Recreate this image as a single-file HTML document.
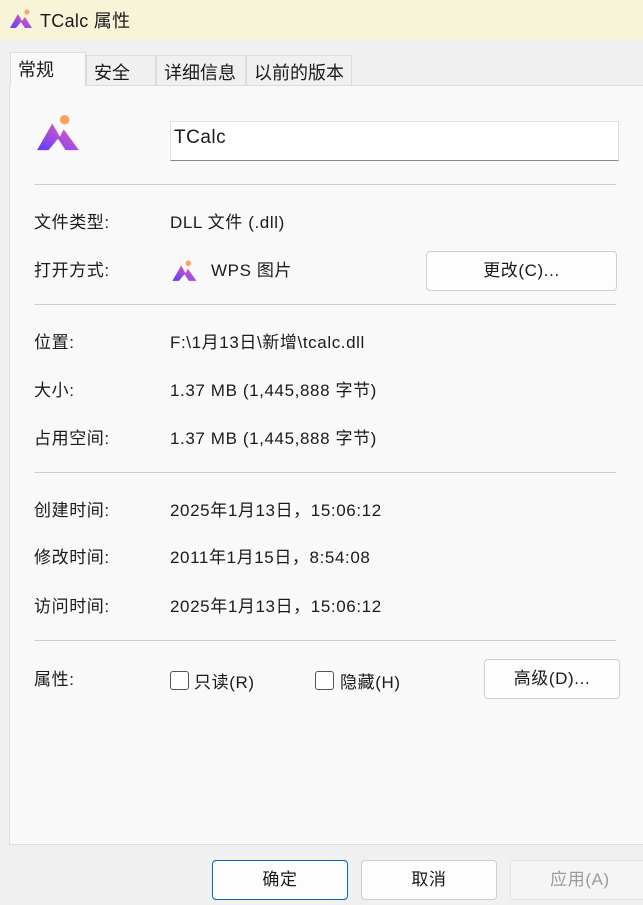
<!DOCTYPE html>
<html><head><meta charset="utf-8"><style>
body{margin:0;width:643px;height:905px;background:#f0f0f0;font-family:"Liberation Sans","Noto Sans CJK SC",sans-serif;font-size:17px;letter-spacing:0.6px;color:#1a1a1a;position:relative;overflow:hidden}
.a{position:absolute;white-space:nowrap}
.title{position:absolute;left:0;top:0;width:643px;height:40px;background:#f8f4d8}
.panel{position:absolute;left:9px;top:85px;width:640px;height:758px;background:#f9f9f9;border:1px solid #dcdcdc}
.tab{position:absolute;top:55px;height:30px;background:#f0f0f0;border:1px solid #dcdcdc;border-bottom:none;box-sizing:border-box;padding:3px 0 0 7px;font-size:18px;letter-spacing:0}
.hr{position:absolute;left:34px;width:582px;height:1px;background:#cfcfcf}
.btn{position:absolute;background:#fdfdfd;border:1px solid #cfcfcf;border-radius:4px;box-sizing:border-box;text-align:center}
.cb{position:absolute;width:19px;height:19px;border:1px solid #555;border-radius:3px;box-sizing:border-box;background:#fff}
</style></head><body>
<div class="title"></div>
<svg class="a" style="left:9px;top:9px" width="24" height="20" viewBox="0 0 48 40"><defs><linearGradient id="g" x1="0" y1="1" x2="1" y2="0"><stop offset="0" stop-color="#5a3cff"/><stop offset="1" stop-color="#ff5fb0"/></linearGradient></defs><circle cx="36" cy="6" r="5" fill="#ffa060"/><path d="M2 38 L18 10 L26 24 L32 16 L46 38 L32 38 L24 26 L14 38Z" fill="url(#g)"/></svg>
<div class="a" style="left:40px;top:7px;font-size:18px;letter-spacing:0.3px">TCalc 属性</div>
<div class="panel"></div>
<div class="tab" style="left:10px;top:52px;height:34px;width:76px;background:#f9f9f9;z-index:2">常规</div>
<div class="tab" style="left:86px;width:70px">安全</div>
<div class="tab" style="left:156px;width:90px">详细信息</div>
<div class="tab" style="left:246px;width:106px">以前的版本</div>
<svg class="a" style="left:34px;top:114px" width="48" height="38" viewBox="0 0 48 40"><defs><linearGradient id="g2" x1="0" y1="1" x2="1" y2="0"><stop offset="0" stop-color="#5a3cff"/><stop offset="1" stop-color="#ff5fb0"/></linearGradient></defs><circle cx="31" cy="6" r="5" fill="#ffa060"/><path d="M2 38 L18 10 L26 24 L30 16 L46 38 L32 38 L24 26 L14 38Z" fill="url(#g2)"/></svg>
<div class="a" style="left:170px;top:121px;width:449px;height:40px;background:#fff;border:1px solid #e0e0e0;border-bottom:1px solid #888;box-sizing:border-box;padding:5px 0 0 3px;font-size:19px;letter-spacing:0.5px">TCalc</div>
<div class="hr" style="top:184px"></div>
<div class="a" style="left:34px;top:208px">文件类型:</div><div class="a" style="left:170px;top:208px">DLL 文件 (.dll)</div>
<div class="a" style="left:34px;top:256px">打开方式:</div>
<svg class="a" style="left:170px;top:260px" width="29" height="22" viewBox="0 0 48 40"><defs><linearGradient id="g3" x1="0" y1="1" x2="1" y2="0"><stop offset="0" stop-color="#5a3cff"/><stop offset="1" stop-color="#ff5fb0"/></linearGradient></defs><circle cx="31" cy="6" r="5" fill="#ffa060"/><path d="M2 38 L18 10 L26 24 L30 16 L46 38 L32 38 L24 26 L14 38Z" fill="url(#g3)"/></svg>
<div class="a" style="left:211px;top:256px">WPS 图片</div>
<div class="btn" style="left:426px;top:251px;width:191px;height:40px;line-height:38px">更改(C)...</div>
<div class="hr" style="top:304px"></div>
<div class="a" style="left:34px;top:328px">位置:</div><div class="a" style="left:170px;top:328px">F:\1月13日\新增\tcalc.dll</div>
<div class="a" style="left:34px;top:376px">大小:</div><div class="a" style="left:170px;top:376px">1.37 MB (1,445,888 字节)</div>
<div class="a" style="left:34px;top:424px">占用空间:</div><div class="a" style="left:170px;top:424px">1.37 MB (1,445,888 字节)</div>
<div class="hr" style="top:472px"></div>
<div class="a" style="left:34px;top:496px">创建时间:</div><div class="a" style="left:170px;top:496px">2025年1月13日，15:06:12</div>
<div class="a" style="left:34px;top:543px">修改时间:</div><div class="a" style="left:170px;top:543px">2011年1月15日，8:54:08</div>
<div class="a" style="left:34px;top:592px">访问时间:</div><div class="a" style="left:170px;top:592px">2025年1月13日，15:06:12</div>
<div class="hr" style="top:640px"></div>
<div class="a" style="left:34px;top:665px">属性:</div>
<div class="cb" style="left:170px;top:671px"></div><div class="a" style="left:194px;top:668px">只读(R)</div>
<div class="cb" style="left:315px;top:671px"></div><div class="a" style="left:340px;top:668px">隐藏(H)</div>
<div class="btn" style="left:484px;top:659px;width:136px;height:40px;line-height:38px">高级(D)...</div>
<div class="btn" style="left:212px;top:860px;width:136px;height:40px;line-height:38px;border:1px solid #0067c0">确定</div>
<div class="btn" style="left:361px;top:860px;width:136px;height:40px;line-height:38px">取消</div>
<div class="btn" style="left:510px;top:860px;width:140px;height:40px;line-height:38px;background:#f5f5f5;border-color:#e5e5e5;color:#9a9a9a">应用(A)</div>
</body></html>
